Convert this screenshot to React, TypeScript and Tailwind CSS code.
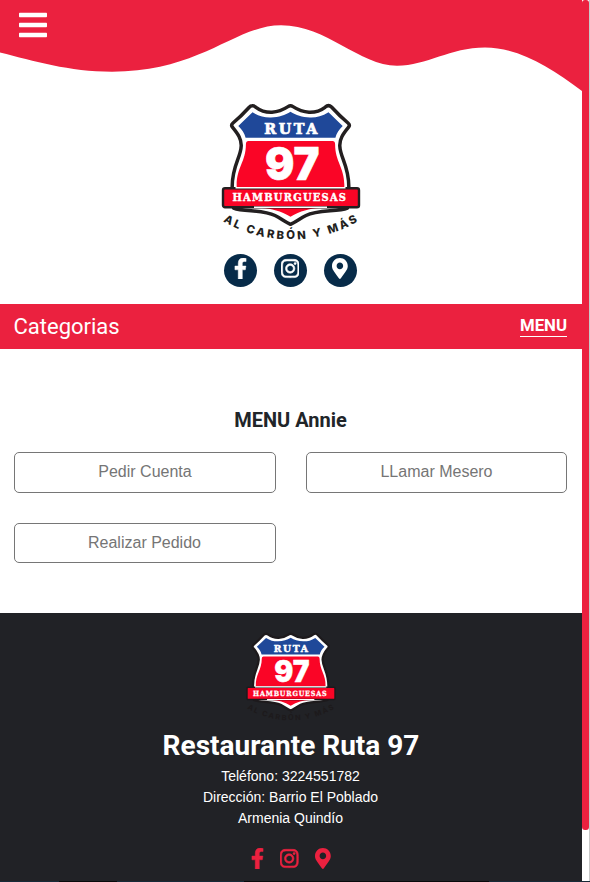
import React from "react";
import { FaBars, FaFacebookF, FaInstagram, FaMapMarkerAlt } from "react-icons/fa";

const SHIELD =
  "M32.3 5.8Q34 5.6 36 7.3C41 11.2 46 12.4 52 12.2C59 11.8 64 9.2 68 6.6Q70.5 5 73 6.6C77 9.2 82 11.8 89 12.2C95 12.4 100 11.2 105 7.3Q108.500 4.200 111.500 7C117 13 122 18 128 23Q130.300 25 128.600 27.200C123 34 119.500 39 119.800 46C120.200 58 129.300 66 128.800 88L127.500 108C117 112 98 109.500 86 115.500C80 118.500 75 122.500 70.500 124.300C66 122.500 61 118.500 55 115.500C43 109.500 24 112 13.500 108L12.200 88C11.700 66 20.800 58 21.200 46C21.500 39 18 34 12.400 27.200Q10.700 25 13 23C19 18 24 13 29 7.500Q30.500 5.800 32.300 5.800Z";

function Logo({ className, id, ink }: { className: string; id: string; ink: string }) {
  return (
    <svg viewBox="0 0 142 142" className={className} role="img" aria-label="Ruta 97">
      <path d={SHIELD} fill="#fff" stroke={ink} strokeWidth="3.5" strokeLinejoin="round" />
      <path
        d="M32.500 12.300C39 16.500 45 17.700 51 17.500C59 17.300 65 15 70.500 11.800C76 15 82 17.300 90 17.500C96 17.700 102 16.500 108.500 12.300L122.700 26C119 30 116.500 33 115.400 37.700H25.600C24.500 33 22 30 18.300 26Z"
        fill="#1f4899"
      />
      <path
        d="M28.500 41H112.500Q115 41 115.100 44C115 62 125 68 124.300 87H16.700C16 68 26 62 25.900 44Q26 41 28.500 41Z"
        fill="#fa0526"
      />
      <path d="M42 108H99C90 108.500 80 111 70.500 116.800C61 111 51 108.500 42 108Z" fill="#fa0526" />
      <rect x="3" y="88.300" width="136" height="19" rx="2" fill="#fa0526" stroke={ink} strokeWidth="2.400" />
      <path d="M15.500 87.800H125.500M34 107.200H107" stroke="#fff" strokeWidth="1.600" fill="none" />
      <g fill="#fff" stroke="#fff" fontWeight="700">
        <text
          x="44.300"
          y="33.800"
          fontSize="14.300"
          strokeWidth="0.700"
          fontFamily="'DejaVu Serif', serif"
          textLength="53"
          lengthAdjust="spacing"
        >
          RUTA
        </text>
        <text
          x="12.500"
          y="101.300"
          fontSize="11"
          strokeWidth="0.400"
          fontFamily="'DejaVu Serif Condensed', 'DejaVu Serif', serif"
          textLength="113.500"
          lengthAdjust="spacing"
        >
          HAMBURGUESAS
        </text>
      </g>
      <text
        x="45"
        y="80"
        fontSize="45.500"
        fontWeight="900"
        fontFamily="Inter, sans-serif"
        fill="#fff"
        stroke="#fff"
        strokeWidth="0.600"
        textLength="54.500"
        lengthAdjust="spacingAndGlyphs"
      >
        97
      </text>
      <path id={id} d="M3 121.200A134 134 0 0 0 141 119.500" fill="none" />
      <text fontSize="11.300" fontWeight="800" fontFamily="Inter, sans-serif" fill={ink}>
        <textPath href={"#" + id} textLength="141" lengthAdjust="spacing">
          AL CARBÓN Y MÁS
        </textPath>
      </text>
    </svg>
  );
}

function Badge({ children }: { children: React.ReactNode }) {
  return (
    <a className="flex h-[33px] w-[33px] items-center justify-center rounded-full bg-[#072b49] pb-1 text-[21px] text-white">
      {children}
    </a>
  );
}

function Field({ label, className = "pb-0.5" }: { label: string; className?: string }) {
  return (
    <input
      type="text"
      placeholder={label}
      className={
        "w-full rounded-[5px] border border-[#767676] bg-white text-center font-['Liberation_Sans',Arial,sans-serif] text-base placeholder:text-[#757575] " +
        className
      }
    />
  );
}

export default function App() {
  return (
    <div className="flex h-[882px] w-[590px] flex-col overflow-hidden bg-white font-['Liberation_Sans',Arial,sans-serif]">
      <div className="flex h-[881px]">
        <main className="flex w-[582px] flex-col">
          <header className="relative h-[92px]">
            <svg viewBox="0 0 582 92" className="block h-[92px] w-[582px]">
              <path
                d="M0 0H582V91C550 67 519 47.500 485 47.500C450 47.500 427 65.700 397 65.700C359 65.700 327 25.300 281 25.300C235 25.300 201 71.700 112 71.700C69 71.700 34 61 0 52.500Z"
                fill="#eb213f"
              />
            </svg>
            <button className="absolute left-[19px] top-[9px] text-white" aria-label="Menu">
              <FaBars className="h-8 w-7" />
            </button>
          </header>

          <section className="flex h-[212px] flex-col items-center pt-2">
            <Logo id="tagline" ink="#231f20" className="h-[142px] w-[142px]" />
            <div className="mt-3 flex gap-[17px] pr-0.5">
              <Badge><FaFacebookF className="w-[13px] stroke-current [stroke-width:12]" /></Badge>
              <Badge><FaInstagram className="w-[18.4px] stroke-current [stroke-width:14]" /></Badge>
              <Badge><FaMapMarkerAlt className="w-[15.75px]" /></Badge>
            </div>
          </section>

          <nav className="flex h-[45px] items-center justify-between bg-[#eb213f] pl-[13.5px] pr-[15px] font-[Roboto,sans-serif] text-white">
            <span className="text-[22px]">Categorias</span>
            <a className="mb-px border-b border-white text-[16.8px] leading-[21px] font-bold">MENU</a>
          </nav>

          <section className="h-[264px] px-3.5 pt-[57px]">
            <h2 className="pr-px text-center font-[Roboto,sans-serif] text-xl leading-7 font-bold text-[#212529]">MENU Annie</h2>
            <form className="mt-[18px] grid grid-cols-[262px_261px] grid-rows-[41px_40px] gap-[30px]">
              <Field label="Pedir Cuenta" />
              <Field label="LLamar Mesero" />
              <Field label="Realizar Pedido" className="pr-px pb-0" />
            </form>
          </section>

          <footer className="flex grow flex-col items-center bg-[#212226] pt-[17px] text-white">
            <Logo id="footer-tagline" ink="#1d1a1c" className="h-[92px] w-[92px]" />
            <h3 className="mt-1.5 font-[Roboto,sans-serif] text-[28px] leading-9 font-bold">Restaurante Ruta 97</h3>
            <div className="mt-0.5 pr-px text-center text-sm leading-[21px]">
              <p>Teléfono: 3224551782</p>
              <p>Dirección: Barrio El Poblado</p>
              <p>Armenia Quindío</p>
            </div>
            <div className="mt-[19px] flex gap-4 text-[21px] text-[#eb213f]">
              <FaFacebookF className="w-[13px] stroke-current [stroke-width:12]" />
              <FaInstagram className="w-[18.4px] stroke-current [stroke-width:14]" />
              <FaMapMarkerAlt className="w-[15.75px]" />
            </div>
          </footer>
        </main>
        <aside className="w-[8px] border-r border-[#c8c8c8] bg-white">
          <div className="h-[830px] rounded-[3px] bg-[#eb213f]" />
        </aside>
      </div>
      <div className="flex h-px bg-[#172a38]">
        <span className="ml-[59px] w-[58px] bg-[#08090b]" />
        <span className="ml-[127px] w-[245px] bg-[#08090b]" />
      </div>
    </div>
  );
}
